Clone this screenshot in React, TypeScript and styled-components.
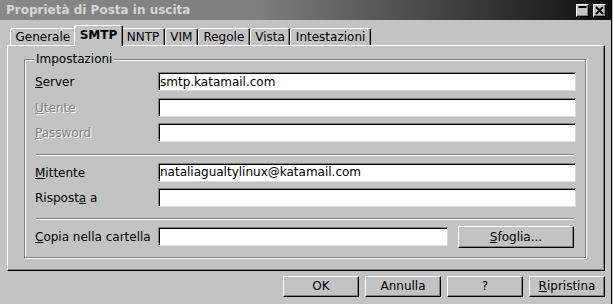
import React from "react";
import styled, { createGlobalStyle, css } from "styled-components";

const GlobalStyle = createGlobalStyle`
  html, body {
    margin: 0;
    padding: 0;
    background: #c3c3c3;
  }
  body {
    font-family: "DejaVu Sans", "Liberation Sans", sans-serif;
    font-size: 12px;
    color: #000;
  }
`;

const Window = styled.div`
  width: 612px;
  height: 304px;
  box-sizing: border-box;
  border-right: 1px solid #000;
  background: #c3c3c3;
  display: flex;
  flex-direction: column;
  overflow: hidden;
`;

const TitleBar = styled.div`
  flex: none;
  height: 20px;
  display: flex;
  align-items: center;
  gap: 4px;
  padding: 0 5px 0 6px;
  background: linear-gradient(to right, #888 0%, #7e7e7e 42%, #0e0e0e 100%);
`;

const Title = styled.div`
  flex: 1;
  padding-top: 1px;
  line-height: 19px;
  font-weight: bold;
  color: #d6d6d6;
  white-space: nowrap;
`;

const TitleButton = styled.button`
  box-sizing: border-box;
  width: 13px;
  height: 13px;
  margin: 0;
  padding: 0;
  display: flex;
  align-items: center;
  justify-content: center;
  background: #c3c3c3;
  border: 1px solid;
  border-color: #fff #000 #000 #fff;
  box-shadow: inset -1px -1px #808080;
`;

const Body = styled.div`
  padding: 0 6px 0 7px;
`;

const TabRow = styled.div`
  position: relative;
  z-index: 1;
  display: flex;
  align-items: flex-end;
  height: 26px;
  margin-bottom: -1px;
  padding-left: 3px;
`;

const Tab = styled.div<{ $active?: boolean }>`
  box-sizing: border-box;
  height: 17px;
  margin-bottom: 1px;
  padding: 0 4.5px;
  line-height: 16px;
  white-space: nowrap;
  background: #c3c3c3;
  border-top: 1px solid #fff;
  border-left: 1px solid #fff;
  border-right: 1px solid #000;
  border-radius: 3px 2px 0 0;
  box-shadow: inset -1px 0 #808080;

  ${({ $active }) =>
    $active &&
    css`
      position: relative;
      z-index: 1;
      height: 21px;
      margin: 0 -2px;
      padding: 1px 5px 0;
      font-weight: bold;
    `}
`;

const Panel = styled.div`
  border: 1px solid;
  border-color: #fff #000 #000 #fff;
  box-shadow: inset -1px -1px #808080;
  padding: 6px 18px 12px 16px;
`;

const Group = styled.fieldset`
  margin: 0;
  min-width: 0;
  padding: 5px 9px 9px 9px;
  border: 1px solid #808080;
  box-shadow: inset 1px 1px #fff, 1px 1px #fff;
`;

const Legend = styled.legend`
  padding: 0 2px;
  line-height: 15px;
  background: #c3c3c3;
`;

const Rows = styled.div`
  display: flex;
  flex-direction: column;
  gap: 6.5px;
`;

const Row = styled.div<{ $tall?: boolean }>`
  display: flex;
  align-items: center;
  height: ${({ $tall }) => ($tall ? 22 : 19)}px;
`;

const Label = styled.label<{ $disabled?: boolean }>`
  flex: none;
  width: 124px;
  box-sizing: border-box;
  padding: 1px 0 0 1px;
  white-space: nowrap;
  color: ${({ $disabled }) => ($disabled ? "#808080" : "#000")};
  text-shadow: ${({ $disabled }) => ($disabled ? "1px 1px 0 #fff" : "none")};
`;

const Input = styled.input<{ $width: number }>`
  box-sizing: border-box;
  width: ${({ $width }) => $width}px;
  height: 19px;
  margin: 0;
  padding: 0 1px;
  font: inherit;
  color: #000;
  background: #fff;
  border: 1px solid;
  border-color: #808080 #dcdcdc #dcdcdc #808080;
  box-shadow: inset 1px 1px #000;
  outline: none;
`;

const Separator = styled.div<{ $top: number }>`
  height: 0;
  margin: ${({ $top }) => $top}px 2px 7px;
  border-top: 1px solid #808080;
  border-bottom: 1px solid #fff;
`;

const Button = styled.button<{ $width: number; $height: number }>`
  box-sizing: border-box;
  flex: none;
  width: ${({ $width }) => $width}px;
  height: ${({ $height }) => $height}px;
  margin: 0;
  padding: 0;
  font: inherit;
  color: #000;
  background: #c3c3c3;
  border: 1px solid;
  border-color: #fff #000 #000 #fff;
  box-shadow: inset -1px -1px #808080;
`;

const BrowseButton = styled(Button)`
  margin-left: 10px;
`;

const ButtonBar = styled.div`
  display: flex;
  justify-content: flex-end;
  gap: 6px;
  margin-top: 5px;
`;

const tabs = ["Generale", "SMTP", "NNTP", "VIM", "Regole", "Vista", "Intestazioni"];

export default function App() {
  return (
    <>
      <GlobalStyle />
      <Window>
        <TitleBar>
          <Title>Proprietà di Posta in uscita</Title>
          <TitleButton aria-label="Massimizza">
            <svg width="9" height="9" viewBox="0 0 9 9">
              <rect x="0.5" y="0" width="8" height="2" fill="#000" />
            </svg>
          </TitleButton>
          <TitleButton aria-label="Chiudi">
            <svg width="9" height="9" viewBox="0 0 9 9">
              <path d="M1 1 L8 8 M8 1 L1 8" stroke="#000" strokeWidth="2" />
            </svg>
          </TitleButton>
        </TitleBar>
        <Body>
          <TabRow>
            {tabs.map((t) => (
              <Tab key={t} $active={t === "SMTP"}>
                {t}
              </Tab>
            ))}
          </TabRow>
          <Panel>
            <Group>
              <Legend>Impostazioni</Legend>
              <Rows>
                <Row>
                  <Label>
                    <u>S</u>erver
                  </Label>
                  <Input $width={418} defaultValue="smtp.katamail.com" />
                </Row>
                <Row>
                  <Label $disabled>
                    <u>U</u>tente
                  </Label>
                  <Input $width={418} />
                </Row>
                <Row>
                  <Label $disabled>
                    <u>P</u>assword
                  </Label>
                  <Input $width={418} />
                </Row>
              </Rows>
              <Separator $top={11.5} />
              <Rows>
                <Row>
                  <Label>
                    <u>M</u>ittente
                  </Label>
                  <Input $width={418} defaultValue="nataliagualtylinux@katamail.com" />
                </Row>
                <Row>
                  <Label>
                    Rispost<u>a</u> a
                  </Label>
                  <Input $width={418} />
                </Row>
              </Rows>
              <Separator $top={10.5} />
              <Row $tall style={{ marginTop: -1 }}>
                <Label>
                  <u>C</u>opia nella cartella
                </Label>
                <Input $width={290} />
                <BrowseButton $width={116} $height={22}>
                  <u>S</u>foglia...
                </BrowseButton>
              </Row>
            </Group>
          </Panel>
          <ButtonBar>
            <Button $width={76} $height={21}>OK</Button>
            <Button $width={76} $height={21}>Annulla</Button>
            <Button $width={76} $height={21}>?</Button>
            <Button $width={76} $height={21}>
              <u>R</u>ipristina
            </Button>
          </ButtonBar>
        </Body>
      </Window>
    </>
  );
}
